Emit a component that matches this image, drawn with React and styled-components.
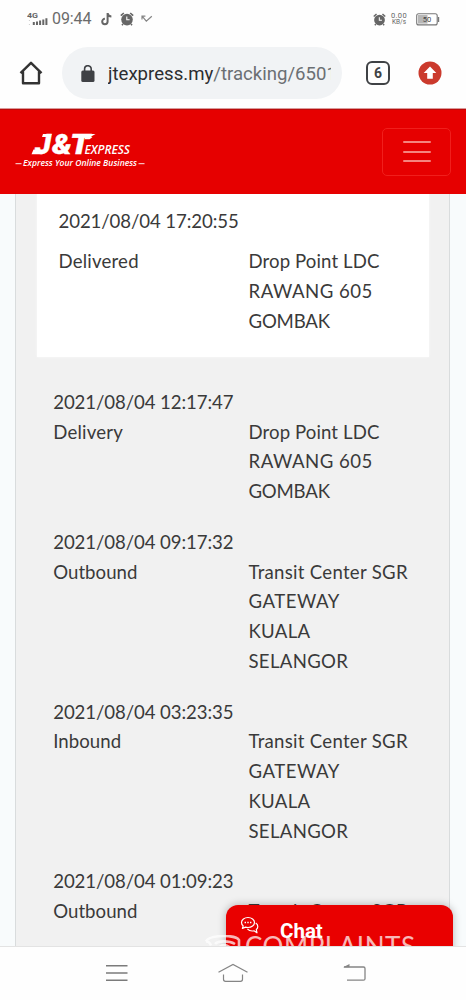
import React from "react";
import styled, { createGlobalStyle } from "styled-components";

const Global = createGlobalStyle`
  * { box-sizing: border-box; }
  body { margin: 0; background: #fff; overflow: hidden; }
`;

const Phone = styled.div`
  width: 466px;
  height: 1000px;
  display: flex;
  flex-direction: column;
  overflow: hidden;
  background: #fefefe;
  font-family: Roboto, sans-serif;
`;

const StatusBar = styled.div`
  height: 38px;
  flex: none;
  display: flex;
  align-items: center;
  padding: 0 26px 0 27px;
  color: #666;
  svg { display: block; flex: none; }
`;

const Clock = styled.span`
  font-size: 16px;
  line-height: 20px;
  letter-spacing: -0.1px;
  margin: 0 10px 0 4px;
  color: #6b6b6b;
`;

const StatusIcons = styled.div`
  flex: 1;
  display: flex;
  align-items: center;
  gap: 7px;
`;

const Speed = styled.div`
  display: flex;
  flex-direction: column;
  align-items: center;
  width: 18px;
  margin: 0 8px 0 4px;
  font-size: 7.5px;
  line-height: 7px;
  letter-spacing: 0.3px;
  span + span { font-size: 6.5px; letter-spacing: 0; }
`;

const Browser = styled.div`
  height: 71px;
  flex: none;
  display: flex;
  align-items: center;
  padding: 0 24px 0 19px;
  border-bottom: 1px solid #d99a9a;
  svg { display: block; flex: none; }
`;

const Address = styled.div`
  width: 280px;
  height: 52px;
  margin: 0 24px 0 19px;
  padding: 1px 11px 0 19px;
  border-radius: 26px;
  background: #f1f3f5;
  display: flex;
  align-items: center;
`;

const Url = styled.div`
  width: 223px;
  margin-left: 13px;
  overflow: hidden;
  white-space: nowrap;
  font-size: 18.6px;
  line-height: 26px;
  color: #6b6f73;
  b { font-weight: 400; color: #2b2d30; }
`;

const TabCount = styled.div`
  width: 24px;
  height: 24px;
  margin-right: 28px;
  border: 2.5px solid #3f4245;
  border-radius: 6px;
  display: flex;
  align-items: center;
  justify-content: center;
  font-size: 14px;
  font-weight: 700;
  color: #3f4245;
`;

const SiteHeader = styled.header`
  height: 85px;
  flex: none;
  display: flex;
  align-items: center;
  justify-content: space-between;
  padding: 0 15px;
  background: #e60000;
  border-top: 1px solid #bb0a0a;
`;

const LogoLink = styled.a`
  display: block;
  margin-top: -6px;
  svg { display: block; }
`;

const MenuButton = styled.button`
  width: 69px;
  height: 48px;
  margin-top: -1px;
  padding: 0 20px;
  border: 1px solid #f11f1c;
  border-radius: 5px;
  background: transparent;
  display: flex;
  flex-direction: column;
  justify-content: center;
  gap: 7.4px;
  span { height: 2px; width: 28px; background: #f5857f; border-radius: 1px; }
`;

const Page = styled.main`
  position: relative;
  height: 752px;
  flex: none;
  overflow: hidden;
  padding: 0 16px 0 15px;
  background: #f8fbfc;
`;

const Panel = styled.section`
  height: 752px;
  padding: 0 20px 0 21px;
  background: #f1f1f1;
  border: solid #d9dcdd;
  border-width: 0 1px;
  font-family: Lato, sans-serif;
  font-size: 18.6px;
  line-height: 29.85px;
  color: #3a3a3a;
`;

const CurrentCard = styled.article`
  height: 163px;
  padding: 13px 0 0 21.5px;
  background: #fff;
  box-shadow: 0 0 2px #fafafa;
`;

const Entry = styled.article`
  margin-bottom: 20.6px;
  padding-left: 16.2px;
`;

const History = styled.div`
  padding-top: 30.8px;
`;

const Columns = styled.div`
  display: grid;
  grid-template-columns: ${(p) => p.$first}px 1fr;
  margin-top: ${(p) => p.$top || 0}px;
`;

const Line = styled.div`
  white-space: nowrap;
  height: 29.85px;
  letter-spacing: ${(p) => p.$spacing || 0}px;
`;

const ChatTab = styled.div`
  position: absolute;
  left: 226px;
  top: 711px;
  width: 227px;
  height: 60px;
  padding: 9px 0 0 14px;
  display: flex;
  align-items: flex-start;
  gap: 21px;
  border-radius: 12px 12px 0 0;
  background: #e90000;
  box-shadow: 0 0 9px rgba(0, 0, 0, 0.28);
  color: #fff;
  font: 700 20.5px/35px Roboto, sans-serif;
  letter-spacing: 0;
`;

const Watermark = styled.div`
  position: absolute;
  left: 205px;
  top: 741px;
  color: #fff;
  opacity: 0.72;
  svg { display: block; }
`;

const SystemNav = styled.nav`
  height: 54px;
  flex: none;
  border-top: 1px solid #e3e3e3;
  background: #fefefe;
  display: flex;
  align-items: center;
  padding: 0 0 2px 105px;
  gap: 88px;
  svg { display: block; }
`;

const DATE_SPACING = -0.09;

const SPACING = {
  "Delivered": 0.2,
  "Delivery": 0.2,
  "Outbound": 0.05,
  "Inbound": 0.05,
  "Drop Point LDC": 0.1,
  "RAWANG 605": 0.5,
  "GOMBAK": -0.2,
  "Transit Center SGR": 0.28,
  "GATEWAY": 0.5,
  "KUALA": 0.3,
  "SELANGOR": 0.3,
};

const dropPoint = ["Drop Point LDC", "RAWANG 605", "GOMBAK"];
const gateway = ["Transit Center SGR", "GATEWAY", "KUALA", "SELANGOR"];

const history = [
  { time: "2021/08/04 12:17:47", status: "Delivery", place: dropPoint },
  { time: "2021/08/04 09:17:32", status: "Outbound", place: gateway },
  { time: "2021/08/04 03:23:35", status: "Inbound", place: gateway },
  { time: "2021/08/04 01:09:23", status: "Outbound", place: ["Transit Center SGR"] },
];

const AlarmIcon = ({ size = 14 }) => (
  <svg width={size} height={size} viewBox="0 0 14 14">
    <circle cx="7" cy="7.6" r="5.8" fill="#666" />
    <path d="M.8 3.7 3.8 1M13.2 3.7 10.2 1M3 12l-1 1.2M11 12l1 1.2" stroke="#666" strokeWidth="1.6" />
    <path d="M6.8 4.6v3.2h2.8" fill="none" stroke="#fff" strokeWidth="1.1" />
  </svg>
);

const SignalIcon = () => (
  <svg width="21" height="16" viewBox="0 0 21 16">
    <text x="0" y="7" fontSize="8" fontWeight="700" fontFamily="Roboto, sans-serif" fill="#666" textLength="11" lengthAdjust="spacingAndGlyphs">4G</text>
    <path d="M6.8 14v-3M10 14v-3.6M13.1 14V9.600M16.300 14V8.600M19.400 14V7.200" stroke="#666" strokeWidth="2" />
    <path d="M2.400 9v1M2.400 13v1" stroke="#ccc" />
  </svg>
);

const TikTokIcon = () => (
  <svg width="12" height="14" viewBox="0 0 12 14">
    <path d="M6.600 1v8.500A2.700 2.700 0 1 1 3.900 6.800M6.600 1.200c.3 2.200 1.700 3.300 3.800 3.400" fill="none" stroke="#666" strokeWidth="2" />
  </svg>
);

const MissedIcon = () => (
  <svg width="12" height="10" viewBox="0 0 12 10">
    <path d="m1.500 2.700 3.800 4.500 5.500-5M1 5.500V2.200h3.400" fill="none" stroke="#858585" strokeWidth="1.200" />
  </svg>
);

const BatteryIcon = () => (
  <svg width="24" height="13" viewBox="0 0 24 13">
    <rect x=".7" y=".7" width="20.5" height="11.2" rx="2" fill="#fff" stroke="#777" strokeWidth="1.1" />
    <rect x="2" y="2" width="9.5" height="8.6" fill="#b7b7b7" />
    <path d="M22.5 4v5" stroke="#777" strokeWidth="1.4" />
    <text x="11" y="9.1" textAnchor="middle" fontSize="7.5" fontFamily="Roboto, sans-serif" fill="#444">50</text>
  </svg>
);

const HomeIcon = () => (
  <svg width="24" height="25" viewBox="0 0 24 25">
    <path d="M1.500 12.200 12 1.800l10.500 10.400M4 10.500v11.800h16V10.500" fill="none" stroke="#333" strokeWidth="2.400" strokeLinejoin="round" />
  </svg>
);

const LockIcon = () => (
  <svg width="14" height="18" viewBox="0 0 14 18">
    <rect x=".3" y="5.500" width="13.200" height="11.400" rx="1.500" fill="#3f4145" />
    <path d="M3.600 6.500V4a3.300 3.300 0 0 1 6.600 0v2.500" fill="none" stroke="#3f4145" strokeWidth="1.600" />
  </svg>
);

const UpdateIcon = () => (
  <svg width="24" height="24" viewBox="0 0 24 24">
    <circle cx="12" cy="12" r="11.5" fill="#cb3a2d" />
    <path d="M12 5.500 5.700 12h3.500v5.800h5.600V12h3.500z" fill="#fff" />
  </svg>
);

const Logo = () => (
  <svg width="132" height="40" viewBox="0 0 132 40" fill="#fff">
    <g fontSize="28" fontFamily="Roboto, sans-serif" fontStyle="italic" fontWeight="900" stroke="#fff" strokeWidth=".4">
      <text x="20" y="25" textLength="16" lengthAdjust="spacingAndGlyphs">J</text>
      <text x="37" y="25" textLength="20" lengthAdjust="spacingAndGlyphs">&amp;</text>
      <text x="55" y="25" textLength="20" lengthAdjust="spacingAndGlyphs">T</text>
    </g>
    <path d="M18.500 20.500h10l-1 4.700H16.500zM28 4.900h8.500l-1 3h-8.500zM68 4.900h12.500l-3.500 2.200h-9zM70 8.200h7.500l-3 2h-5z" />
    <text x="69.500" y="25.300" fontSize="12" fontFamily="Open Sans, sans-serif" fontStyle="italic" fontWeight="600" textLength="45.500" lengthAdjust="spacingAndGlyphs">EXPRESS</text>
    <text x="8" y="37.200" fontSize="8.600" fontFamily="Open Sans, sans-serif" fontStyle="italic" fontWeight="600" textLength="114" lengthAdjust="spacingAndGlyphs">Express Your Online Business</text>
    <path d="M.5 34.700h6M123.500 34.700h6" stroke="#fff" strokeWidth=".9" />
  </svg>
);

const ChatIcon = () => (
  <svg width="19" height="20" viewBox="0 0 19 20" fill="none" stroke="#fff" strokeWidth="1.2" strokeLinejoin="round">
    <path d="M8 3.500C4.400 3.500 1.500 5.700 1.500 8.500c0 1.400.6 2.500 1.700 3.400l-.8 2.600 3.100-1.400c.8.3 1.600.4 2.500.4 3.600 0 6.500-2.200 6.500-5S11.600 3.500 8 3.500z" />
    <path d="M15.700 9c1.400.9 2.100 2 2.100 3.400 0 1.200-.6 2.300-1.500 3.100l.7 3.300-3-2c-2.700.5-5.200-.3-6.600-1.900" />
    <path d="M4.600 8.500h1.400M7.300 8.500h1.400M10 8.500h1.400" strokeWidth="1.400" />
  </svg>
);

const WatermarkArt = () => (
  <svg width="212" height="26" viewBox="0 0 212 26" fill="#fff">
    <path d="M1 6.500C4-.5 31-.5 34 5v11M1 6.500c3 0 4 1 5 4M10 9c3-3.500 14-3.500 20 0M14 12.500c3-3 7-3 11 0" fill="none" stroke="#fff" strokeWidth="2.600" />
    <text x="40" y="20.500" fontSize="26" fontFamily="Lato, sans-serif" textLength="170" lengthAdjust="spacing">COMPLAINTS</text>
  </svg>
);

const RecentsIcon = () => (
  <svg width="24" height="20" viewBox="0 0 24 20">
    <path d="M1 2.700h21.500M1 10h21.500M1 17.200h21.500" stroke="#7b7b7b" strokeWidth="1.400" />
  </svg>
);

const NavHomeIcon = () => (
  <svg width="32" height="20" viewBox="0 0 32 20">
    <path d="M1.500 9.300 16 1.500l14.500 7.800M6.500 11.500v4.800q0 2 2 2h15q2 0 2-2v-4.800" fill="none" stroke="#858585" strokeWidth="1.200" />
  </svg>
);

const BackIcon = () => (
  <svg width="32" height="20" viewBox="-6 0 32 20">
    <path d="M1 4h19.500q1.500 0 1.500 1.500v10.200q0 1.500-1.500 1.500H4" fill="none" stroke="#858585" strokeWidth="1.300" />
    <path d="M0 4.200 6.500 1v3.200z" fill="#858585" />
  </svg>
);

const Text = ({ children }) => <Line $spacing={SPACING[children]}>{children}</Line>;

const Details = ({ status, place, first, top }) => (
  <Columns $first={first} $top={top}>
    <Text>{status}</Text>
    <div>{place.map((line) => <Text key={line}>{line}</Text>)}</div>
  </Columns>
);

export default function App() {
  return (
    <Phone>
      <Global />
      <StatusBar>
        <SignalIcon />
        <Clock>09:44</Clock>
        <StatusIcons>
          <TikTokIcon />
          <AlarmIcon />
          <MissedIcon />
        </StatusIcons>
        <AlarmIcon size={13} />
        <Speed><span>0.00</span><span>KB/s</span></Speed>
        <BatteryIcon />
      </StatusBar>
      <Browser>
        <HomeIcon />
        <Address>
          <LockIcon />
          <Url><b>jtexpress.my</b>/tracking/6501</Url>
        </Address>
        <TabCount>6</TabCount>
        <UpdateIcon />
      </Browser>
      <SiteHeader>
        <LogoLink><Logo /></LogoLink>
        <MenuButton aria-label="Menu"><span /><span /><span /></MenuButton>
      </SiteHeader>
      <Page>
        <Panel>
          <CurrentCard>
            <Line $spacing={DATE_SPACING}>2021/08/04 17:20:55</Line>
            <Details status="Delivered" place={dropPoint} first={190} top={10} />
          </CurrentCard>
          <History>
            {history.map((item) => (
              <Entry key={item.time}>
                <Line $spacing={DATE_SPACING}>{item.time}</Line>
                <Details status={item.status} place={item.place} first={195.3} />
              </Entry>
            ))}
          </History>
        </Panel>
        <ChatTab><ChatIcon />Chat</ChatTab>
        <Watermark><WatermarkArt /></Watermark>
      </Page>
      <SystemNav>
        <RecentsIcon />
        <NavHomeIcon />
        <BackIcon />
      </SystemNav>
    </Phone>
  );
}
